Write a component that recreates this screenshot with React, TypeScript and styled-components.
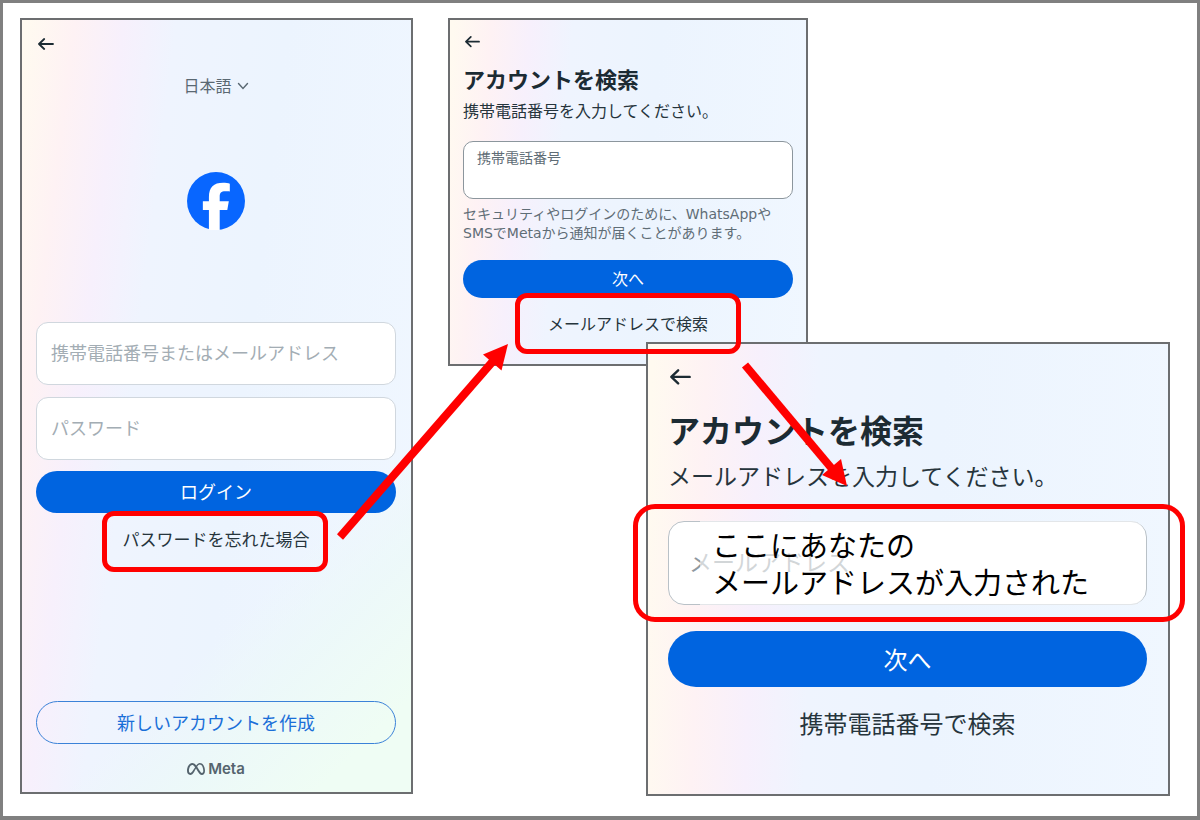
import React from "react";
import styled, { createGlobalStyle, css } from "styled-components";
import { FaMeta } from "react-icons/fa6";

const GlobalStyle = createGlobalStyle`
  *, *::before, *::after { box-sizing: border-box; }
  body {
    margin: 0;
    background: #fff;
    color: #1c2b33;
    font-family: Inter, "Noto Sans CJK JP", sans-serif;
    font-weight: 400;
  }
  button, input, select { font: inherit; color: inherit; }
  h2, p { margin: 0; }
`;

const RED = "#ff0000";

const Canvas = styled.main`
  position: relative;
  display: grid;
  grid-template-columns: 393fr 35fr 198fr 162fr 362fr;
  grid-template-rows: 324px 24px auto;
  align-content: start;
  min-height: 100vh;
  padding: 15px 27px 20px 17px;
  border: 3px solid #808080;
  border-bottom-width: 4px;
`;

const Panel = styled.section<{
  $columns: string;
  $rows: string;
  $padding: string;
  $angle: number;
  $green?: boolean;
}>`
  grid-column: ${(p) => p.$columns};
  grid-row: ${(p) => p.$rows};
  display: flex;
  flex-direction: column;
  min-width: 0;
  padding: ${(p) => p.$padding};
  border: 2px solid #6c6e70;
  background: ${(p) =>
      p.$green
        ? "linear-gradient(135deg, rgba(238, 253, 243, 0) 70%, rgba(236, 249, 248, 0.8) 79%, #effdf4 92%),"
        : ""}
    linear-gradient(${(p) => p.$angle}deg, #fffaf0 1%, #fef2f4 11%, #f7f0fc 21%, #eff4fe 32%, #ecf4fe 55%, #f0f7ff 100%);
`;

const LoginPanel = styled(Panel)`
  margin-bottom: 2px;
`;

const BackButton = styled.button`
  display: flex;
  align-items: center;
  align-self: flex-start;
  height: 16px;
  padding: 0 2px;
  border: 0;
  background: none;
`;

const LanguagePicker = styled.div`
  display: flex;
  align-items: center;
  align-self: center;
  gap: 4px;
  margin-top: 22px;
  color: #5a6872;
`;

const LanguageSelect = styled.select`
  appearance: none;
  padding: 0;
  border: 0;
  background: none;
  font-size: 16px;
  line-height: 24px;
`;

const Logo = styled.svg`
  align-self: center;
  flex: none;
  width: 58px;
  height: 58px;
  margin: 74px 0 92px;
`;

const LoginFields = styled.div`
  display: flex;
  flex-direction: column;
  gap: 12px;
`;

const TextInput = styled.input`
  display: block;
  width: 100%;
  height: 63px;
  padding: 0 14px;
  border: 1px solid #d0d7de;
  border-radius: 12px;
  background: #fff;
  font-size: 18px;
  &::placeholder { color: #a3adb4; opacity: 1; }
`;

const EmailInput = styled(TextInput)`
  height: 84px;
  padding: 0 20px;
  border-color: #b9c1c7;
  border-radius: 16px;
  font-size: 23px;
  &::placeholder { color: #8f999f; }
`;

const PrimaryButton = styled.button<{ $height: number; $size: number; $top: number }>`
  flex: none;
  height: ${(p) => p.$height}px;
  margin-top: ${(p) => p.$top}px;
  padding: 0 0 2px;
  border: 0;
  border-radius: 28px;
  background: #0064e0;
  color: #fff;
  font-size: ${(p) => p.$size}px;
`;

const OutlineButton = styled.button`
  height: 43px;
  margin-top: auto;
  padding: 0 0 2px;
  border: 1px solid #3b82d8;
  border-radius: 22px;
  background: none;
  color: #1a6fd8;
  font-size: 18px;
`;

const ActionLink = styled.a<{ $size: number; $top: number; $line: number }>`
  position: relative;
  align-self: center;
  margin-top: ${(p) => p.$top}px;
  color: #26343c;
  font-size: ${(p) => p.$size}px;
  line-height: ${(p) => p.$line}px;
  text-decoration: none;
`;

const ringBorder = css`
  position: absolute;
  z-index: 2;
  border: 5px solid ${RED};
  pointer-events: none;
`;

const LinkRing = styled.span<{ $inset: string }>`
  ${ringBorder}
  inset: ${(p) => p.$inset};
  border-radius: 12px;
`;

const FieldRing = styled.span`
  ${ringBorder}
  inset: -17px -38px -17px -35px;
  border-radius: 22px;
`;

const MetaBrand = styled.div`
  display: flex;
  align-items: center;
  justify-content: center;
  gap: 3px;
  margin-top: 15px;
  color: #55646e;
  font-size: 15px;
  font-weight: 600;
  line-height: 20px;
`;

const Title = styled.h2<{ $size: number; $line: number; $top: number }>`
  margin-top: ${(p) => p.$top}px;
  font-size: ${(p) => p.$size}px;
  font-weight: 700;
  line-height: ${(p) => p.$line}px;
  white-space: nowrap;
`;

const Lead = styled.p<{ $size: number; $line: number; $top: number }>`
  margin-top: ${(p) => p.$top}px;
  color: #26343c;
  font-size: ${(p) => p.$size}px;
  line-height: ${(p) => p.$line}px;
  white-space: nowrap;
`;

const PhoneField = styled.div`
  display: flex;
  flex-direction: column;
  height: 58px;
  margin-top: 19px;
  padding: 6px 13px;
  border: 1px solid #8c969d;
  border-radius: 10px;
  background: #fff;
`;

const PhoneLabel = styled.label`
  color: #5f6d76;
  font-size: 14px;
  line-height: 20px;
`;

const PhoneInput = styled.input`
  min-height: 0;
  flex: 1;
  padding: 0;
  border: 0;
  outline: 0;
  background: none;
`;

const Helper = styled.p`
  && { margin-top: 6px; }
  color: #5f6d76;
  font-family: "DejaVu Sans", "Noto Sans CJK JP", sans-serif;
  font-size: 14px;
  line-height: 19px;
  white-space: nowrap;
`;

const EmailField = styled.div`
  position: relative;
  margin-top: 29px;
`;

const EmailNote = styled.p`
  position: absolute;
  inset: 0 2px 0 32px;
  padding: 7px 0 0 12px;
  border-radius: 0 14px 14px 0;
  background: rgba(255, 255, 255, 0.6);
  color: #000;
  font-size: 29px;
  line-height: 37px;
  white-space: nowrap;
`;

const ArrowLayer = styled.svg`
  position: absolute;
  inset: -3px -3px -4px;
  z-index: 3;
  width: calc(100% + 6px);
  height: calc(100% + 7px);
  pointer-events: none;
`;

function Back({ width }: { width: number }) {
  return (
    <BackButton type="button" aria-label="戻る">
      <svg
        width={width}
        height={(width * 3) / 4}
        viewBox="0 0 16 12"
        fill="none"
        stroke="#1c2b33"
        strokeWidth="1.8"
        strokeLinecap="round"
        strokeLinejoin="round"
      >
        <path d="M15 6H1.2M6.2 1L1 6L6.2 11" />
      </svg>
    </BackButton>
  );
}

function LoginScreen() {
  return (
    <LoginPanel $columns="1" $rows="1 / 4" $padding="16px 15px 13px 14px" $angle={97} $green>
      <Back width={16} />
      <LanguagePicker>
        <LanguageSelect aria-label="言語">
          <option>日本語</option>
        </LanguageSelect>
        <svg width="12" height="8" viewBox="0 0 12 8" fill="none" stroke="currentColor" strokeWidth="1.4" strokeLinecap="round">
          <path d="M1.500 1.500L6 6.500L10.500 1.500" />
        </svg>
      </LanguagePicker>
      <Logo viewBox="0 0 172 172" role="img" aria-label="Facebook">
        <circle cx="86" cy="86" r="86" fill="#0866ff" />
        <path
          fill="#fff"
          d="M65 172V113H47V86.5H65V75C65 45 79 32 107 32C114 32 123 33 127 34.5V58C124 57.5 119 57.4 114 57.4C101 57.4 97 62 97 74V86.5H124L119.5 113H97V172Z"
        />
      </Logo>
      <LoginFields>
        <TextInput aria-label="携帯電話番号またはメールアドレス" placeholder="携帯電話番号またはメールアドレス" />
        <TextInput type="password" aria-label="パスワード" placeholder="パスワード" />
      </LoginFields>
      <PrimaryButton type="button" $height={42} $size={18} $top={11}>ログイン</PrimaryButton>
      <ActionLink href="#forgot" $size={17} $line={24} $top={15}>
        パスワードを忘れた場合
        <LinkRing $inset="-17px -18px -20px -21px" />
      </ActionLink>
      <OutlineButton type="button">新しいアカウントを作成</OutlineButton>
      <MetaBrand>
        <FaMeta size={18} />
        Meta
      </MetaBrand>
    </LoginPanel>
  );
}

function PhoneSearchScreen() {
  return (
    <Panel $columns="3 / 5" $rows="1 / 3" $padding="14px 13px 20px" $angle={95}>
      <Back width={15} />
      <Title $size={22} $line={28} $top={16}>アカウントを検索</Title>
      <Lead $size={16} $line={22} $top={6}>携帯電話番号を入力してください。</Lead>
      <PhoneField>
        <PhoneLabel htmlFor="phone">携帯電話番号</PhoneLabel>
        <PhoneInput id="phone" type="tel" />
      </PhoneField>
      <Helper>
        セキュリティやログインのために、WhatsAppや
        <br />
        SMSでMetaから通知が届くことがあります。
      </Helper>
      <PrimaryButton type="button" $height={38} $size={16} $top={17}>次へ</PrimaryButton>
      <ActionLink href="#email" $size={16} $line={24} $top={14}>
        メールアドレスで検索
        <LinkRing $inset="-19px -33px -18px -33px" />
      </ActionLink>
    </Panel>
  );
}

function EmailSearchScreen() {
  return (
    <Panel $columns="4 / 6" $rows="2 / 4" $padding="25px 21px 53px 20px" $angle={92}>
      <Back width={21} />
      <Title $size={32} $line={40} $top={27}>アカウントを検索</Title>
      <Lead $size={23} $line={30} $top={10}>メールアドレスを入力してください。</Lead>
      <EmailField>
        <EmailInput type="email" aria-label="メールアドレス" placeholder="メールアドレス" />
        <EmailNote>
          ここにあなたの
          <br />
          メールアドレスが入力された
        </EmailNote>
        <FieldRing />
      </EmailField>
      <PrimaryButton type="button" $height={56} $size={24} $top={26}>次へ</PrimaryButton>
      <ActionLink href="#phone" $size={24} $line={32} $top={22}>携帯電話番号で検索</ActionLink>
    </Panel>
  );
}

export default function App() {
  return (
    <>
      <GlobalStyle />
      <Canvas>
        <LoginScreen />
        <PhoneSearchScreen />
        <EmailSearchScreen />
        <ArrowLayer viewBox="0 0 1200 820" preserveAspectRatio="none" aria-hidden="true">
          <g stroke={RED} strokeWidth="8" fill={RED}>
            <path d="M340 537L494 360" />
            <path d="M508 344L483 354.5L501.5 370.5Z" stroke="none" />
            <path d="M745 365L833 470" />
            <path d="M847 486L841 459L822 475Z" stroke="none" />
          </g>
        </ArrowLayer>
      </Canvas>
    </>
  );
}
